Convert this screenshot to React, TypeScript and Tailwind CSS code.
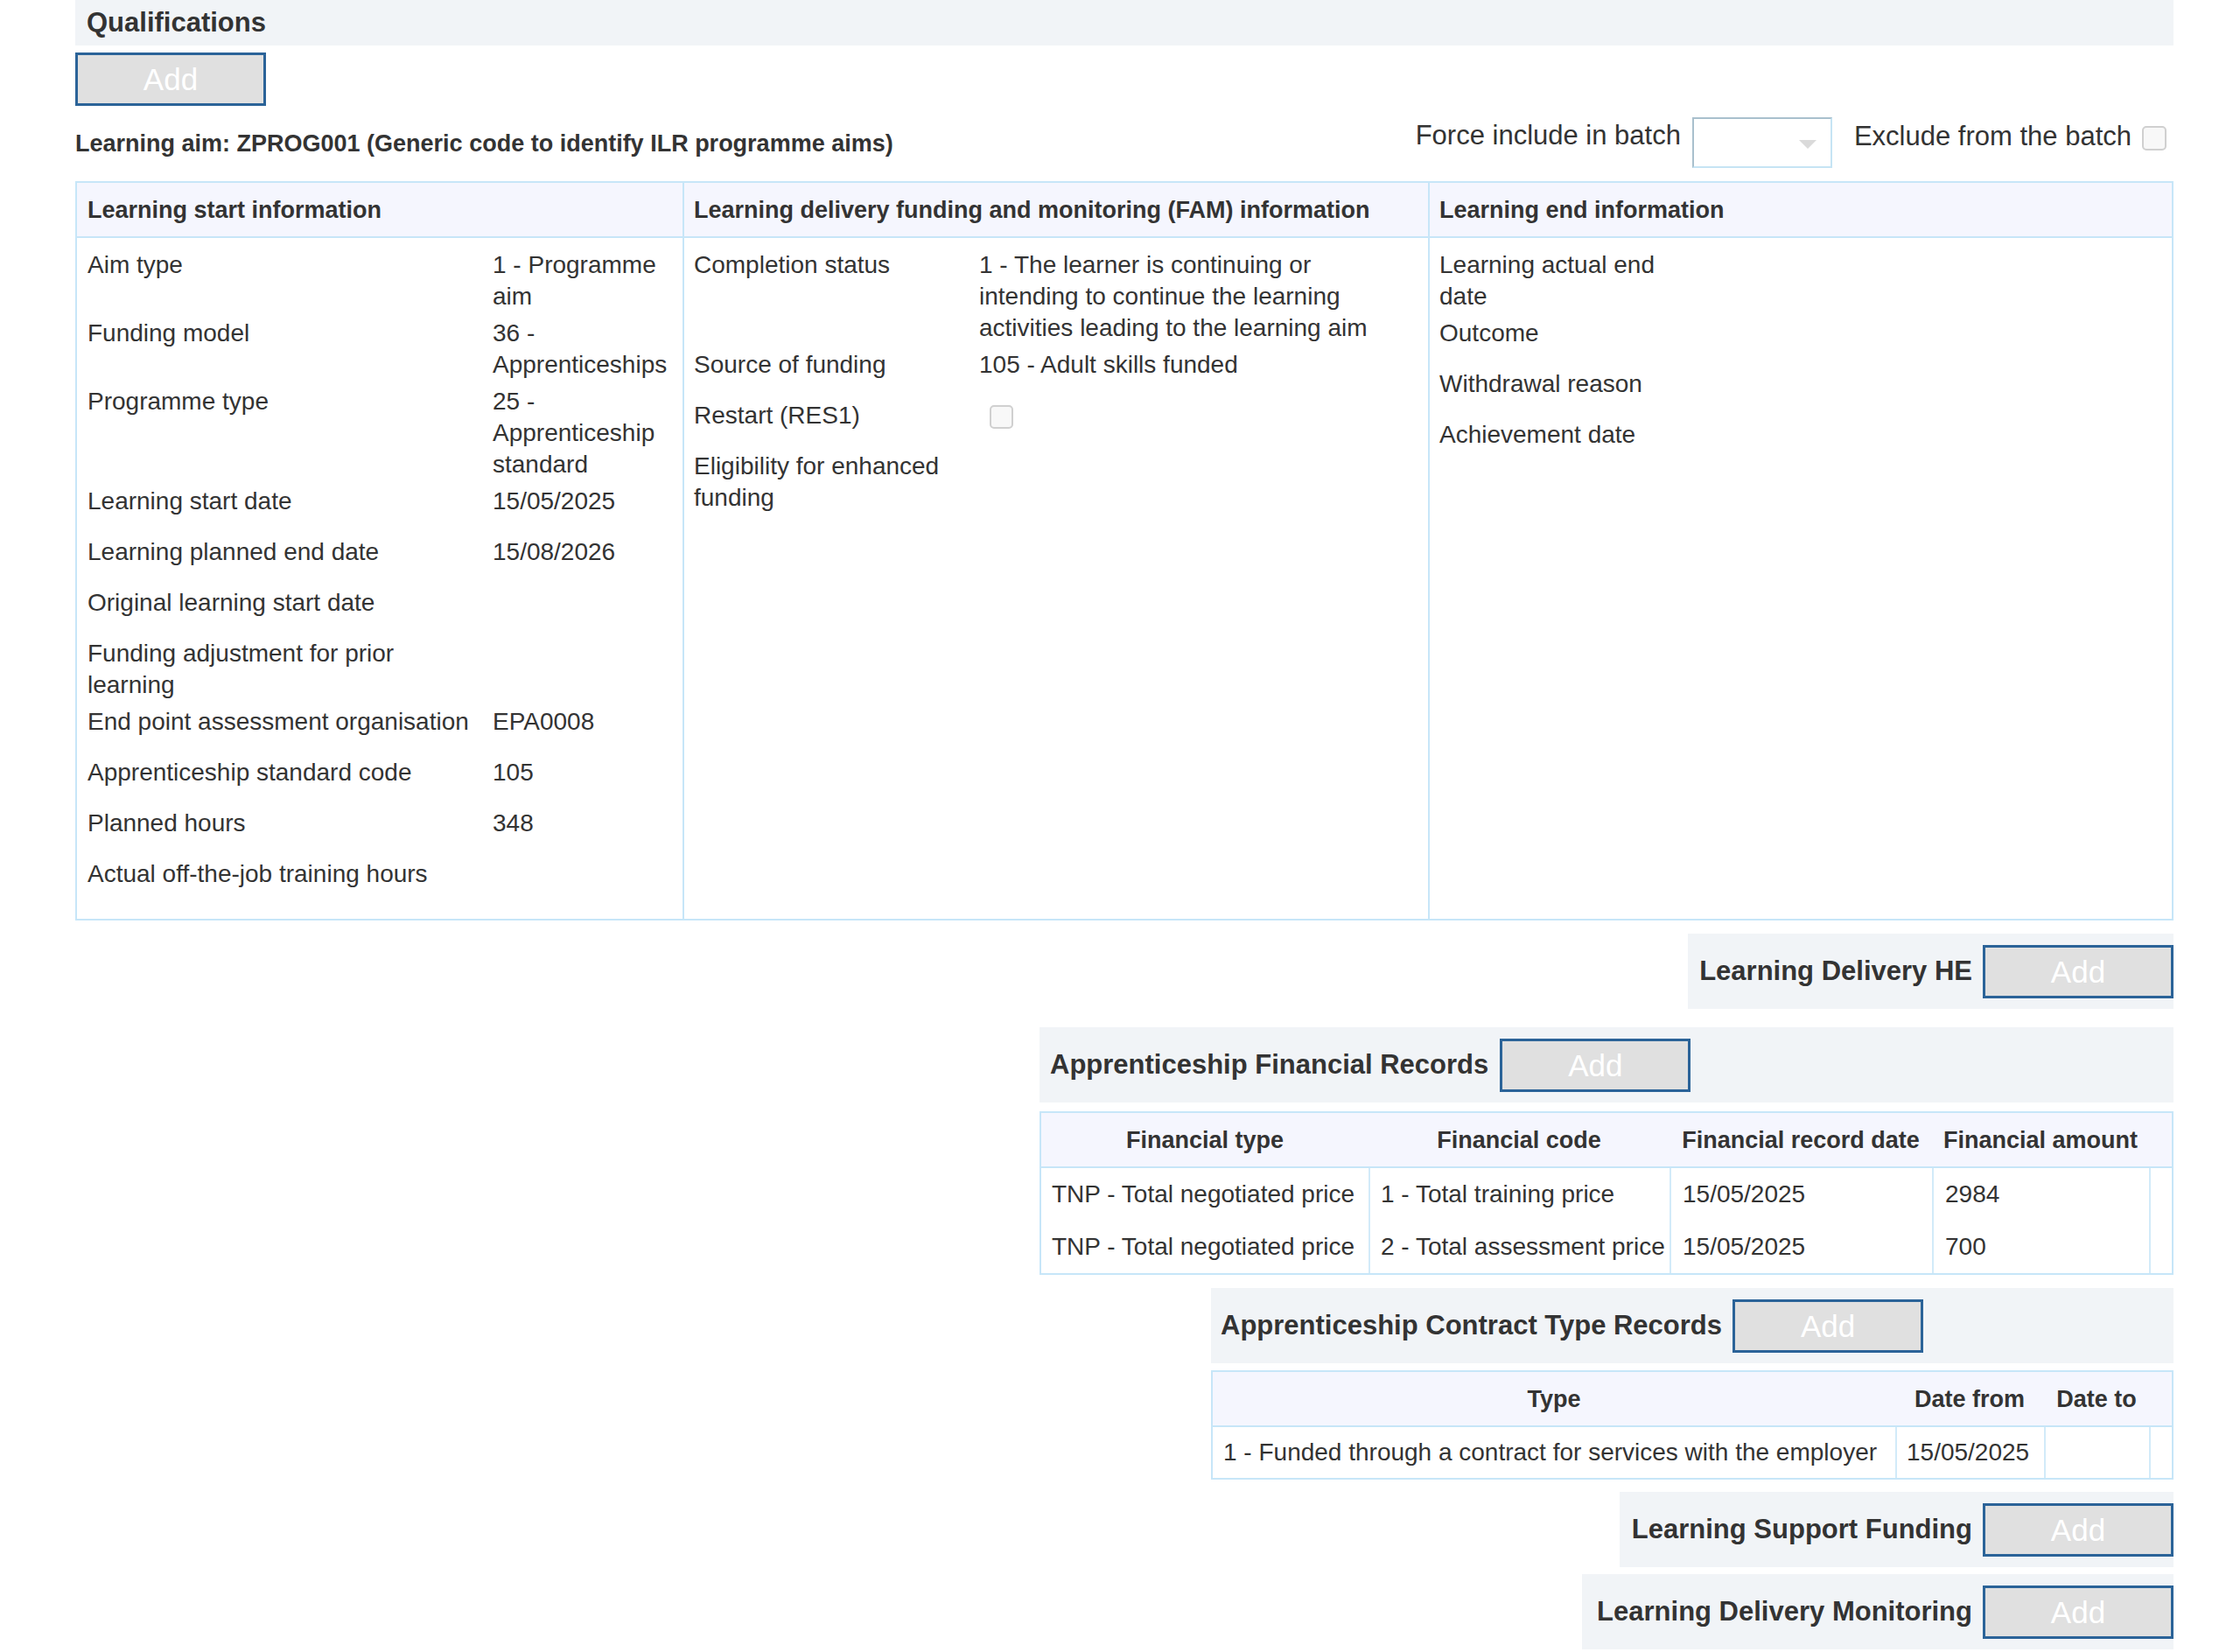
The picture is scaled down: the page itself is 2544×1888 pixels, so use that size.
import React from "react";

interface Field {
  label: string;
  value?: string;
  checkbox?: boolean;
}

const startInfo: Field[] = [
  { label: "Aim type", value: "1 - Programme aim" },
  { label: "Funding model", value: "36 - Apprenticeships" },
  { label: "Programme type", value: "25 - Apprenticeship standard" },
  { label: "Learning start date", value: "15/05/2025" },
  { label: "Learning planned end date", value: "15/08/2026" },
  { label: "Original learning start date" },
  { label: "Funding adjustment for prior learning" },
  { label: "End point assessment organisation", value: "EPA0008" },
  { label: "Apprenticeship standard code", value: "105" },
  { label: "Planned hours", value: "348" },
  { label: "Actual off-the-job training hours" },
];

const famInfo: Field[] = [
  {
    label: "Completion status",
    value:
      "1 - The learner is continuing or intending to continue the learning activities leading to the learning aim",
  },
  { label: "Source of funding", value: "105 - Adult skills funded" },
  { label: "Restart (RES1)", checkbox: true },
  { label: "Eligibility for enhanced funding" },
];

const endInfo: Field[] = [
  { label: "Learning actual end date" },
  { label: "Outcome" },
  { label: "Withdrawal reason" },
  { label: "Achievement date" },
];

const financialRows = [
  ["TNP - Total negotiated price", "1 - Total training price", "15/05/2025", "2984"],
  ["TNP - Total negotiated price", "2 - Total assessment price", "15/05/2025", "700"],
];

function AddButton() {
  return (
    <button className="w-[218px] h-[61px] shrink-0 bg-[#e0e0e0] border-[3px] border-[#2b6398] text-white text-[35px] leading-none">
      Add
    </button>
  );
}

function Checkbox({ size = "w-[28px] h-[28px]" }: { size?: string }) {
  return (
    <span
      className={`block ${size} rounded-[5px] border-2 border-[#d0d0d0] bg-[#f8f8f8]`}
    />
  );
}

function FieldGrid({ fields, cols }: { fields: Field[]; cols: string }) {
  return (
    <div className={`grid ${cols}`}>
      {fields.map((f) => (
        <React.Fragment key={f.label}>
          <div className="min-h-[58px] py-[3px] pr-[12px]">{f.label}</div>
          <div className="min-h-[58px] py-[3px]">
            {f.checkbox ? (
              <div className="pt-[6px] pl-[12px]">
                <Checkbox size="w-[27px] h-[27px]" />
              </div>
            ) : (
              f.value
            )}
          </div>
        </React.Fragment>
      ))}
    </div>
  );
}

function SectionBar({ title, pl }: { title: string; pl: string }) {
  return (
    <div className={`flex items-center gap-[12px] h-[86px] bg-[#f1f4f7] ${pl}`}>
      <span className="text-[31px] font-bold">{title}</span>
      <AddButton />
    </div>
  );
}

export default function App() {
  return (
    <div className="min-h-[1888px] bg-white pl-[86px] pr-[60px] text-[#333333] font-['Liberation_Sans',Arial,sans-serif] text-[28px] leading-[36px]">
      <div className="h-[52px] bg-[#f1f4f7] flex items-center px-[13px]">
        <span className="text-[31px] font-bold">Qualifications</span>
      </div>

      <div className="mt-[8px]">
        <AddButton />
      </div>

      <div className="mt-[13px] flex items-start justify-between h-[58px]">
        <div className="mt-[12px] font-bold text-[27px]">
          Learning aim: ZPROG001 (Generic code to identify ILR programme aims)
        </div>
        <div className="flex items-start mr-[8px]">
          <span className="mt-[3px] text-[31px]">Force include in batch</span>
          <div className="ml-[13px] w-[160px] h-[58px] border-2 border-t-[#a9c0cd] border-l-[#a9c0cd] border-b-[#c6e4f4] border-r-[#c6e4f4] bg-white flex items-center justify-end pr-[16px]">
            <svg width="20" height="10" viewBox="0 0 20 10" className="mt-[4px]">
              <path d="M0 0 L20 0 L10 10 Z" fill="#dadada" />
            </svg>
          </div>
          <span className="ml-[25px] mt-[4px] text-[31px]">Exclude from the batch</span>
          <div className="ml-[12px] mt-[10px]">
            <Checkbox />
          </div>
        </div>
      </div>

      <div className="mt-[15px] border-2 border-[#c7e6f8] grid grid-cols-[692px_852px_1fr]">
        <div className="h-[63px] border-b-2 border-[#c7e6f8] bg-[#f5f6fe] flex items-center px-[12px] font-bold text-[27px]">
          Learning start information
        </div>
        <div className="h-[63px] border-b-2 border-l-2 border-[#c7e6f8] bg-[#f5f6fe] flex items-center px-[11px] font-bold text-[27px]">
          Learning delivery funding and monitoring (FAM) information
        </div>
        <div className="h-[63px] border-b-2 border-l-2 border-[#c7e6f8] bg-[#f5f6fe] flex items-center px-[11px] font-bold text-[27px]">
          Learning end information
        </div>

        <div className="pt-[10px] pb-[14px] px-[12px]">
          <FieldGrid fields={startInfo} cols="grid-cols-[463px_205px]" />
        </div>
        <div className="pt-[10px] pb-[14px] px-[11px] border-l-2 border-[#c7e6f8]">
          <FieldGrid fields={famInfo} cols="grid-cols-[326px_470px]" />
        </div>
        <div className="pt-[10px] pb-[14px] px-[11px] border-l-2 border-[#c7e6f8]">
          <FieldGrid fields={endInfo} cols="grid-cols-[270px_1fr]" />
        </div>
      </div>

      <div className="flex flex-col items-end">
        <div className="mt-[15px]">
          <SectionBar title="Learning Delivery HE" pl="pl-[13px]" />
        </div>

        <div className="mt-[21px] w-[1296px]">
          <div className="flex items-center gap-[13px] h-[86px] bg-[#f1f4f7] pl-[12px]">
            <span className="text-[31px] font-bold">Apprenticeship Financial Records</span>
            <AddButton />
          </div>
          <div className="mt-[10px] border-2 border-[#c7e6f8]">
            <div className="grid grid-cols-[374px_344px_300px_248px_26px] h-[63px] bg-[#f5f6fe] border-b-2 border-[#c7e6f8] font-bold text-[27px]">
              <div className="flex items-center justify-center">Financial type</div>
              <div className="flex items-center justify-center">Financial code</div>
              <div className="flex items-center justify-center">Financial record date</div>
              <div className="flex items-center justify-center">Financial amount</div>
              <div />
            </div>
            <div className="grid grid-cols-[374px_344px_300px_248px_26px]">
              {financialRows.map((row, i) => (
                <React.Fragment key={i}>
                  <div className="h-[60px] flex items-center pl-[12px]">{row[0]}</div>
                  <div className="h-[60px] flex items-center pl-[12px] border-l-2 border-[#d2ebf9]">
                    {row[1]}
                  </div>
                  <div className="h-[60px] flex items-center pl-[13px] border-l-2 border-[#d2ebf9]">
                    {row[2]}
                  </div>
                  <div className="h-[60px] flex items-center pl-[13px] border-l-2 border-[#d2ebf9]">
                    {row[3]}
                  </div>
                  <div className="h-[60px] border-l-2 border-[#d2ebf9]" />
                </React.Fragment>
              ))}
            </div>
          </div>
        </div>

        <div className="mt-[15px] w-[1100px]">
          <div className="flex items-center gap-[12px] h-[86px] bg-[#f1f4f7] pl-[11px]">
            <span className="text-[31px] font-bold">Apprenticeship Contract Type Records</span>
            <AddButton />
          </div>
          <div className="mt-[8px] border-2 border-[#c7e6f8]">
            <div className="grid grid-cols-[780px_170px_120px_26px] h-[63px] bg-[#f5f6fe] border-b-2 border-[#c7e6f8] font-bold text-[27px]">
              <div className="flex items-center justify-center">Type</div>
              <div className="flex items-center justify-center">Date from</div>
              <div className="flex items-center justify-center">Date to</div>
              <div />
            </div>
            <div className="grid grid-cols-[780px_170px_120px_26px]">
              <div className="h-[58px] flex items-center pl-[12px]">
                1 - Funded through a contract for services with the employer
              </div>
              <div className="h-[58px] flex items-center pl-[11px] border-l-2 border-[#d2ebf9]">
                15/05/2025
              </div>
              <div className="h-[58px] border-l-2 border-[#d2ebf9]" />
              <div className="h-[58px] border-l-2 border-[#d2ebf9]" />
            </div>
          </div>
        </div>

        <div className="mt-[14px]">
          <SectionBar title="Learning Support Funding" pl="pl-[14px]" />
        </div>
        <div className="mt-[8px]">
          <SectionBar title="Learning Delivery Monitoring" pl="pl-[17px]" />
        </div>
      </div>
    </div>
  );
}
